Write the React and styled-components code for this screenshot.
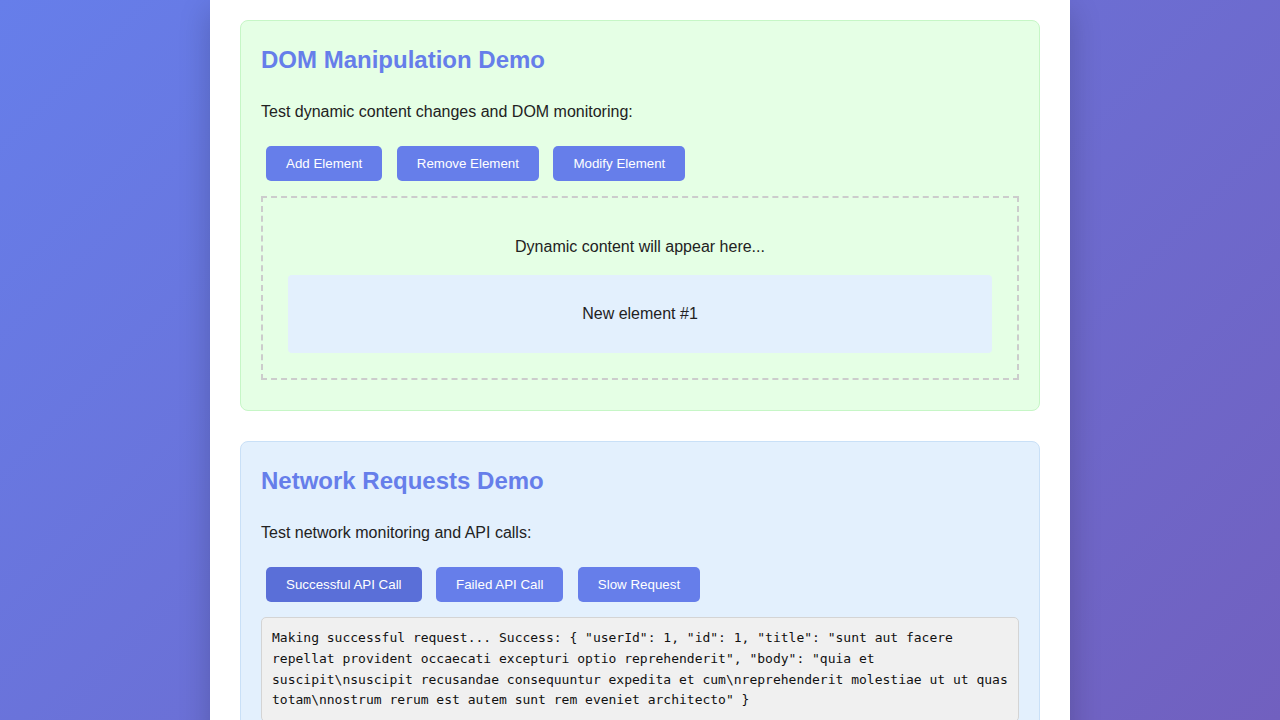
import React from "react";
import styled, { createGlobalStyle } from "styled-components";

const GlobalStyle = createGlobalStyle`
  html, body {
    margin: 0;
    padding: 0;
    height: 100%;
    overflow: hidden;
  }
  body {
    font-family: "Liberation Sans", Arial, sans-serif;
    line-height: 1.6;
    color: #222;
  }
`;

const Page = styled.div`
  height: 100vh;
  overflow: hidden;
  background: linear-gradient(135deg, #667eea 0%, #7160bf 100%);
`;

const Container = styled.main`
  width: 800px;
  margin: 0 auto;
  padding: 20px 30px;
  background: #fff;
  box-shadow: 0 10px 30px rgba(0, 0, 0, 0.2);
`;

const Section = styled.section`
  margin-bottom: 30px;
  padding: 20px;
  border-radius: 8px;
  border: 1px solid ${(p) => (p.$tone === "green" ? "#c6f6c6" : "#c9e0f7")};
  background: ${(p) => (p.$tone === "green" ? "#e5ffe5" : "#e3f0fd")};
`;

const Title = styled.h2`
  margin: 0 0 0.83em;
  font-size: 24px;
  font-weight: bold;
  color: #667eea;
`;

const Text = styled.p`
  margin: 16px 0;
  font-size: 16px;
`;

const ButtonRow = styled.div`
  display: flex;
  gap: 4.45px;
`;

const Button = styled.button`
  margin: 5px;
  padding: 10px 20px;
  border: none;
  border-radius: 5px;
  background: ${(p) => (p.$active ? "#5a6fd8" : "#667eea")};
  color: #fff;
  font-family: "Liberation Sans", Arial, sans-serif;
  font-size: 13.33px;
  line-height: normal;
  cursor: pointer;
`;

const DropZone = styled.div`
  margin: 10px 0;
  padding: 20px;
  border: 2px dashed #ccc;
  text-align: center;
`;

const NewElement = styled.div`
  margin: 5px;
  padding: 10px;
  border-radius: 4px;
  background: #e3f0fd;
`;

const Output = styled.div`
  margin: 10px 0;
  padding: 10px;
  border: 1px solid #d4d4d4;
  border-radius: 5px;
  background: #f0f0f0;
  font-family: "DejaVu Sans Mono", monospace;
  font-size: 13px;
  line-height: 1.6;
  color: #111;
  word-wrap: break-word;
`;

const responseText =
  'Making successful request... Success: { "userId": 1, "id": 1, "title": "sunt aut facere repellat provident occaecati excepturi optio reprehenderit", "body": "quia et suscipit\\nsuscipit recusandae consequuntur expedita et cum\\nreprehenderit molestiae ut ut quas totam\\nnostrum rerum est autem sunt rem eveniet architecto" }';

export default function App() {
  return (
    <>
      <GlobalStyle />
      <Page>
        <Container>
          <Section $tone="green">
            <Title>DOM Manipulation Demo</Title>
            <Text>Test dynamic content changes and DOM monitoring:</Text>
            <ButtonRow>
              <Button>Add Element</Button>
              <Button>Remove Element</Button>
              <Button>Modify Element</Button>
            </ButtonRow>
            <DropZone>
              <Text>Dynamic content will appear here...</Text>
              <NewElement>
                <Text>New element #1</Text>
              </NewElement>
            </DropZone>
          </Section>
          <Section $tone="blue">
            <Title>Network Requests Demo</Title>
            <Text>Test network monitoring and API calls:</Text>
            <ButtonRow>
              <Button $active>Successful API Call</Button>
              <Button>Failed API Call</Button>
              <Button>Slow Request</Button>
            </ButtonRow>
            <Output>{responseText}</Output>
          </Section>
        </Container>
      </Page>
    </>
  );
}
